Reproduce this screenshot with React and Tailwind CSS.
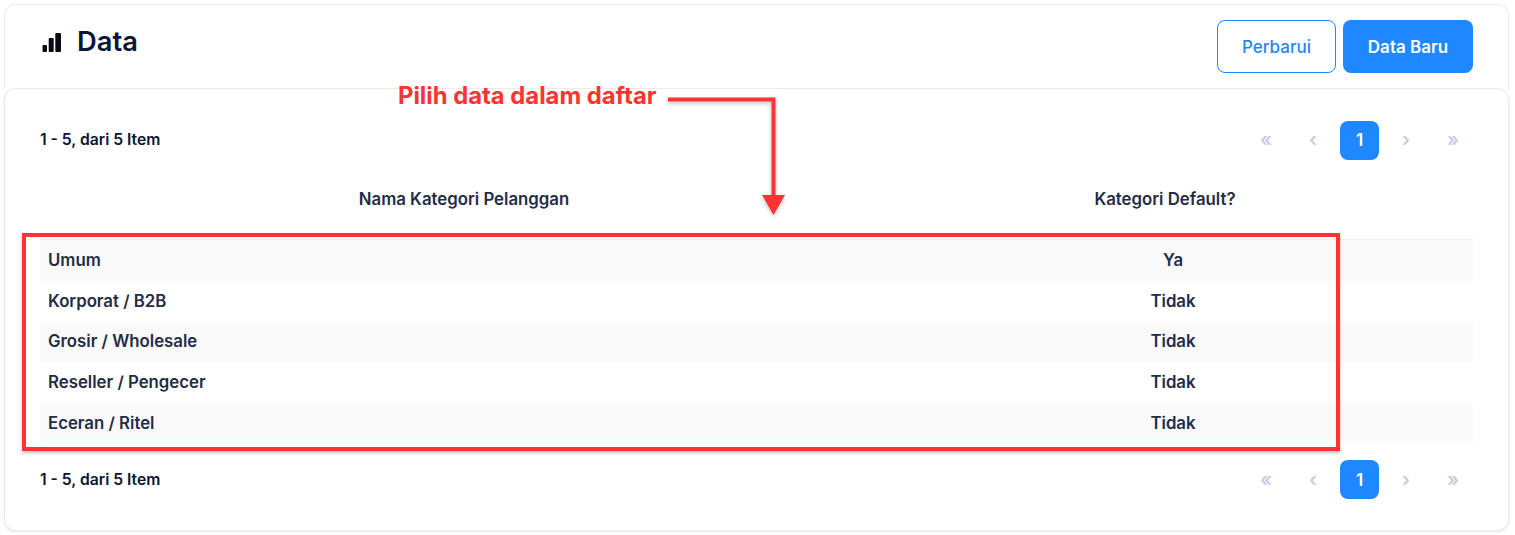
const ROWS = [
  { name: 'Umum', isDefault: 'Ya' },
  { name: 'Korporat / B2B', isDefault: 'Tidak' },
  { name: 'Grosir / Wholesale', isDefault: 'Tidak' },
  { name: 'Reseller / Pengecer', isDefault: 'Tidak' },
  { name: 'Eceran / Ritel', isDefault: 'Tidak' },
]

function Pagination() {
  return (
    <div className="flex items-center justify-between h-[40px]">
      <span className="text-[15.7px] font-semibold text-[#0b1536]">1 - 5, dari 5 Item</span>
      <div className="flex items-center gap-[7px] text-[#c5cbe0] text-[19px] font-semibold">
        <span className="w-[40px] h-[40px] flex items-center justify-center">«</span>
        <span className="w-[40px] h-[40px] flex items-center justify-center">‹</span>
        <span className="w-[39px] h-[39px] flex items-center justify-center rounded-lg bg-[#1f87ff] text-white text-[17px] font-semibold pt-[1px]">1</span>
        <span className="w-[40px] h-[40px] flex items-center justify-center">›</span>
        <span className="w-[40px] h-[40px] flex items-center justify-center">»</span>
      </div>
    </div>
  )
}

function Annotation() {
  return (
    <>
      <span className="absolute left-[398px] top-[81px] text-[23.8px] leading-[30px] font-bold text-[#ff3333]">
        Pilih data dalam daftar
      </span>
      <svg className="absolute left-[660px] top-[90px] drop-shadow-[0_2px_2px_rgba(0,0,0,0.25)]" width="130" height="130" viewBox="0 0 130 130" fill="none">
        <path d="M8 9.500H113.500V108" stroke="#ff3333" strokeWidth="4" />
        <path d="M102 105H125L113.500 125Z" fill="#ff3333" />
      </svg>
      <div className="absolute left-[22px] top-[233px] w-[1318px] h-[218px] border-[4px] border-[#ff3333] shadow-[0_2px_3px_rgba(0,0,0,0.25)]" />
    </>
  )
}

export default function App() {
  return (
    <div className="relative w-[1515px] h-[535px] overflow-hidden bg-white pt-[4px] pl-[4px] font-['Inter',sans-serif]">
      <div className="w-[1505px] h-[85px] rounded-t-xl border border-b-0 border-[#ebebeb] bg-white flex justify-between pl-[36px] pr-[35px] pt-[15px]">
        <div className="flex items-start gap-[16px]">
          <svg className="mt-[13px]" width="20" height="20" viewBox="0 0 20 20" fill="#0a0a14">
            <rect x="1.500" y="12" width="4.500" height="7" rx="1" />
            <rect x="7.700" y="5" width="5" height="14" rx="1" />
            <rect x="14.300" y="0" width="5.700" height="19" rx="1" />
          </svg>
          <h1 className="text-[27.300px] leading-[44px] font-semibold text-[#0b1536]">Data</h1>
        </div>
        <div className="flex gap-[7px]">
          <button className="w-[119px] h-[53px] pt-[2px] rounded-lg border border-[#1f87ff] bg-white text-[#1f87ff] text-[17px] font-medium">Perbarui</button>
          <button className="w-[130px] h-[53px] pt-[2px] rounded-lg bg-[#1f87ff] text-white text-[17px] font-semibold">Data Baru</button>
        </div>
      </div>

      <div className="w-[1505px] h-[443px] -mt-[1px] rounded-xl border border-[#ebebeb] bg-white shadow-[0_1px_3px_rgba(0,0,0,0.1)] pl-[35px] pr-[35px] pt-[31px]">
        <Pagination />
        <div className="mt-[20px] flex h-[60px] border-b border-[#efefef] text-[16.800px] font-semibold text-[#242c46] pb-[20px] items-center">
          <div className="w-[848px] text-center">Nama Kategori Pelanggan</div>
          <div className="w-[554px] text-center">Kategori Default?</div>
        </div>
        <div className="text-[16.800px] font-semibold text-[#242c46]">
          {ROWS.map((row, i) => (
            <div key={row.name} className={`flex items-center h-[40.800px] ${i % 2 === 0 ? 'bg-[#fafafa]' : 'bg-white'}`}>
              <div className="w-[848px] pl-[8px]">{row.name}</div>
              <div className="w-[570px] text-center">{row.isDefault}</div>
            </div>
          ))}
        </div>
        <div className="mt-[16px]">
          <Pagination />
        </div>
      </div>

      <Annotation />
    </div>
  )
}
